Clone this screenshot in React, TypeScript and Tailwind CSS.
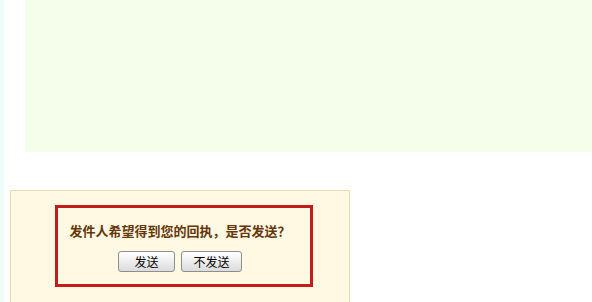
export default function App() {
  return (
    <div className="relative h-[302px] w-[592px] overflow-hidden bg-white font-['Noto_Sans_CJK_SC','Liberation_Sans',sans-serif]">
      {/* left edge strip */}
      <div className="absolute left-0 top-0 h-full w-[4px] bg-[#effcfc]" />

      {/* green content area */}
      <div className="ml-[25px] h-[152px] bg-[#f5feea]" />

      {/* receipt panel */}
      <div className="ml-[10px] mt-[38px] h-[120px] w-[340px] border border-b-0 border-[#ecdcae] bg-[#fff8e3] pt-[14px]">
        <div className="ml-[44px] w-[258px] border-[3px] border-[#c21d1b] pb-[12px] pl-[10px] pr-[18px] pt-[14px]">
          <p className="text-center text-[13px] font-bold leading-[18px] text-[#643608]">
            发件人希望得到您的回执，是否发送？
          </p>
          <div className="mt-[11px] flex justify-center gap-[6px]">
            <button className="h-[21px] w-[57px] rounded-[3px] border border-[#8e8e8e] bg-gradient-to-b from-white to-[#dcdcdc] text-[12px] leading-none text-black">
              发送
            </button>
            <button className="h-[21px] w-[61px] rounded-[3px] border border-[#8e8e8e] bg-gradient-to-b from-white to-[#dcdcdc] text-[12px] leading-none text-black">
              不发送
            </button>
          </div>
        </div>
      </div>
    </div>
  )
}
